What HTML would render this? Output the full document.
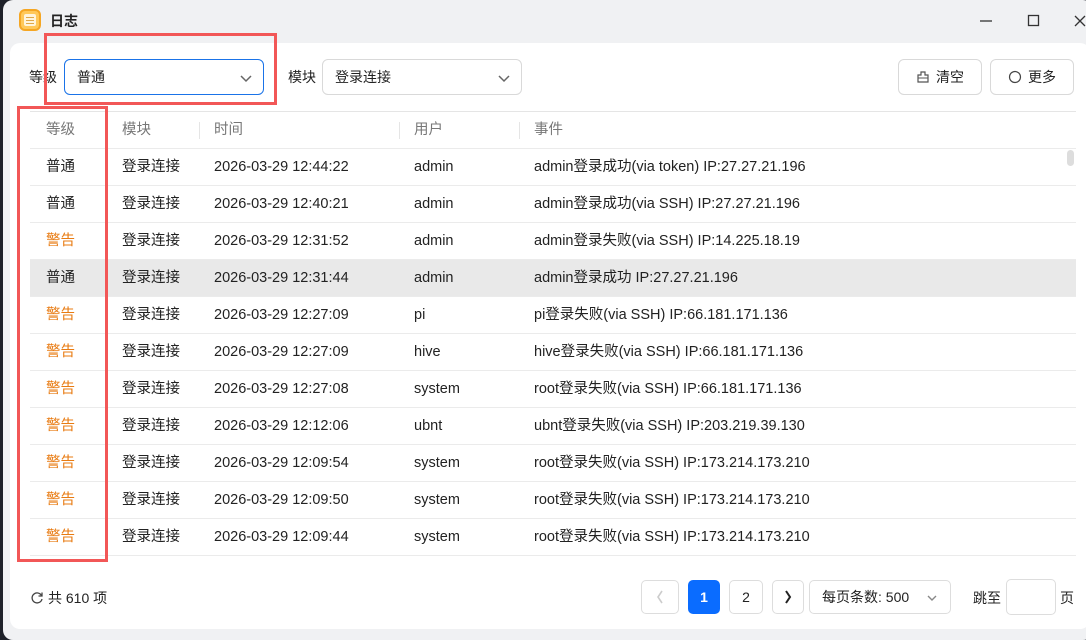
<!DOCTYPE html>
<html><head><meta charset="utf-8"><style>
*{box-sizing:border-box;margin:0;padding:0}
body{width:1086px;height:633px;background:#1e2129;font-family:"Liberation Sans","Noto Sans CJK SC",sans-serif;font-size:14.5px;color:#222;position:relative;overflow:hidden}
.win{position:absolute;left:3px;top:0;width:1090px;height:640px;background:#f0f1f3;border-radius:10px}
.panel{position:absolute;left:10px;top:43px;width:1080px;height:586px;background:#fff;border-radius:10px}
.abs{position:absolute}
.title{left:50px;top:11px;font-size:14px;font-weight:bold;color:#222}
.sel{position:absolute;height:36px;border:1px solid #d9d9d9;border-radius:6px;background:#fff;padding:0 12px;line-height:34px;font-size:14px}
.sel svg{position:absolute;right:10px;top:11px}
.btn{position:absolute;height:36px;border:1px solid #d9d9d9;border-radius:6px;background:#fff;line-height:34px;font-size:14px;text-align:center}
.row{position:absolute;left:30px;width:1046px;height:37px;border-bottom:1px solid #ebebeb;line-height:36px}
.row span{position:absolute;white-space:nowrap}
.c1{left:16px}.c2{left:92px}.c3{left:184px}.c4{left:384px}.c5{left:504px}
.warn{color:#e87b12}
.hd{color:#777}
.red{position:absolute;border:3px solid #f25757}
.pg{position:absolute;top:580px;height:34px;border:1px solid #ddd;border-radius:5px;background:#fff;text-align:center;line-height:32px;font-size:14px}
.pg svg{position:absolute;left:50%;top:50%;transform:translate(-50%,-50%)}
</style></head><body>
<div class="win"></div>
<div class="abs" style="left:19px;top:9px;width:22px;height:22px;border-radius:6px;background:#ffc85a;border:2px solid #f5a623"><div style="position:absolute;left:3px;top:3px;width:12px;height:12px;background:#fff4dc;border-radius:2px"></div><div style="position:absolute;left:5px;top:6px;width:8px;height:1px;background:#e0a84a;box-shadow:0 3px 0 #e0a84a,0 6px 0 #e0a84a"></div></div>
<div class="abs title">日志</div>
<svg class="abs" style="left:976px;top:10px" width="110" height="22"><path d="M4 11h12" stroke="#333" stroke-width="1.3"/><rect x="52.5" y="5.5" width="10" height="10" fill="none" stroke="#333" stroke-width="1.3"/><path d="M99 6l10 10M109 6l-10 10" stroke="#333" stroke-width="1.3"/></svg>
<div class="panel"></div>
<div class="abs" style="left:29px;top:67px;font-size:14px">等级</div>
<div class="sel" style="left:64px;top:59px;width:200px;border-color:#1a73e8">普通<svg width="14" height="14"><path d="M2 5l5 5 5-5" fill="none" stroke="#666" stroke-width="1.5"/></svg></div>
<div class="abs" style="left:288px;top:67px;font-size:14px">模块</div>
<div class="sel" style="left:322px;top:59px;width:200px">登录连接<svg width="14" height="14"><path d="M2 5l5 5 5-5" fill="none" stroke="#666" stroke-width="1.5"/></svg></div>
<div class="btn" style="left:898px;top:59px;width:84px"><svg width="14" height="14" style="vertical-align:-2px;margin-right:6px"><path d="M5 2h4v3h3v7H2V5h3z" fill="none" stroke="#555" stroke-width="1.2"/><path d="M2 8h10" stroke="#555"/></svg>清空</div>
<div class="btn" style="left:990px;top:59px;width:84px"><svg width="14" height="14" style="vertical-align:-2px;margin-right:6px"><circle cx="7" cy="7" r="5.5" fill="none" stroke="#444" stroke-width="1.2"/></svg>更多</div>
<div class="abs" style="left:30px;top:111px;width:1046px;height:1px;background:#e5e5e5"></div>
<div class="row hd" style="top:112px"><span class="c1">等级</span><span class="c2">模块</span><span class="c3">时间</span><span class="c4">用户</span><span class="c5">事件</span>
<i class="abs" style="left:169px;top:10px;width:1px;height:17px;background:#e5e5e5"></i><i class="abs" style="left:369px;top:10px;width:1px;height:17px;background:#e5e5e5"></i><i class="abs" style="left:489px;top:10px;width:1px;height:17px;background:#e5e5e5"></i></div>
<div class="row" style="top:149px"><span class="c1">普通</span><span class="c2">登录连接</span><span class="c3">2026-03-29 12:44:22</span><span class="c4">admin</span><span class="c5">admin登录成功(via token) IP:27.27.21.196</span></div>
<div class="row" style="top:186px"><span class="c1">普通</span><span class="c2">登录连接</span><span class="c3">2026-03-29 12:40:21</span><span class="c4">admin</span><span class="c5">admin登录成功(via SSH) IP:27.27.21.196</span></div>
<div class="row" style="top:223px"><span class="c1 warn">警告</span><span class="c2">登录连接</span><span class="c3">2026-03-29 12:31:52</span><span class="c4">admin</span><span class="c5">admin登录失败(via SSH) IP:14.225.18.19</span></div>
<div class="row" style="top:260px;background:#e9e9e9"><span class="c1">普通</span><span class="c2">登录连接</span><span class="c3">2026-03-29 12:31:44</span><span class="c4">admin</span><span class="c5">admin登录成功 IP:27.27.21.196</span></div>
<div class="row" style="top:297px"><span class="c1 warn">警告</span><span class="c2">登录连接</span><span class="c3">2026-03-29 12:27:09</span><span class="c4">pi</span><span class="c5">pi登录失败(via SSH) IP:66.181.171.136</span></div>
<div class="row" style="top:334px"><span class="c1 warn">警告</span><span class="c2">登录连接</span><span class="c3">2026-03-29 12:27:09</span><span class="c4">hive</span><span class="c5">hive登录失败(via SSH) IP:66.181.171.136</span></div>
<div class="row" style="top:371px"><span class="c1 warn">警告</span><span class="c2">登录连接</span><span class="c3">2026-03-29 12:27:08</span><span class="c4">system</span><span class="c5">root登录失败(via SSH) IP:66.181.171.136</span></div>
<div class="row" style="top:408px"><span class="c1 warn">警告</span><span class="c2">登录连接</span><span class="c3">2026-03-29 12:12:06</span><span class="c4">ubnt</span><span class="c5">ubnt登录失败(via SSH) IP:203.219.39.130</span></div>
<div class="row" style="top:445px"><span class="c1 warn">警告</span><span class="c2">登录连接</span><span class="c3">2026-03-29 12:09:54</span><span class="c4">system</span><span class="c5">root登录失败(via SSH) IP:173.214.173.210</span></div>
<div class="row" style="top:482px"><span class="c1 warn">警告</span><span class="c2">登录连接</span><span class="c3">2026-03-29 12:09:50</span><span class="c4">system</span><span class="c5">root登录失败(via SSH) IP:173.214.173.210</span></div>
<div class="row" style="top:519px"><span class="c1 warn">警告</span><span class="c2">登录连接</span><span class="c3">2026-03-29 12:09:44</span><span class="c4">system</span><span class="c5">root登录失败(via SSH) IP:173.214.173.210</span></div>
<div class="abs" style="left:1067px;top:150px;width:7px;height:16px;background:#ddd;border-radius:4px"></div>
<div class="abs" style="left:30px;top:588px;font-size:14px"><svg width="14" height="14" style="vertical-align:-2px;margin-right:4px"><path d="M11.5 4.5A5 5 0 1 0 12 8" fill="none" stroke="#444" stroke-width="1.3"/><path d="M12 1.5v3.5H8.5" fill="none" stroke="#444" stroke-width="1.3"/></svg>共 610 项</div>
<div class="pg" style="left:641px;width:38px"><svg width="10" height="16"><path d="M7 2L3 8l4 6" fill="none" stroke="#ccc" stroke-width="1.6"/></svg></div>
<div class="pg" style="left:688px;width:32px;background:#0a6cff;border-color:#0a6cff;color:#fff;font-weight:bold">1</div>
<div class="pg" style="left:729px;width:34px">2</div>
<div class="pg" style="left:772px;width:32px"><svg width="10" height="16"><path d="M3 2l4 6-4 6" fill="none" stroke="#222" stroke-width="2"/></svg></div>
<div class="pg" style="left:809px;width:142px;text-align:left;padding-left:12px">每页条数: 500<svg width="12" height="12" style="position:absolute;left:auto;right:12px;top:11px;transform:none"><path d="M2 4l4 4 4-4" fill="none" stroke="#888" stroke-width="1.4"/></svg></div>
<div class="abs" style="left:973px;top:588px;font-size:14px">跳至</div>
<div class="pg" style="left:1006px;width:50px;height:36px;top:579px"></div>
<div class="abs" style="left:1060px;top:588px;font-size:14px">页</div>
<div class="red" style="left:44px;top:33px;width:233px;height:72px"></div>
<div class="red" style="left:17px;top:106px;width:91px;height:456px"></div>
</body></html>
